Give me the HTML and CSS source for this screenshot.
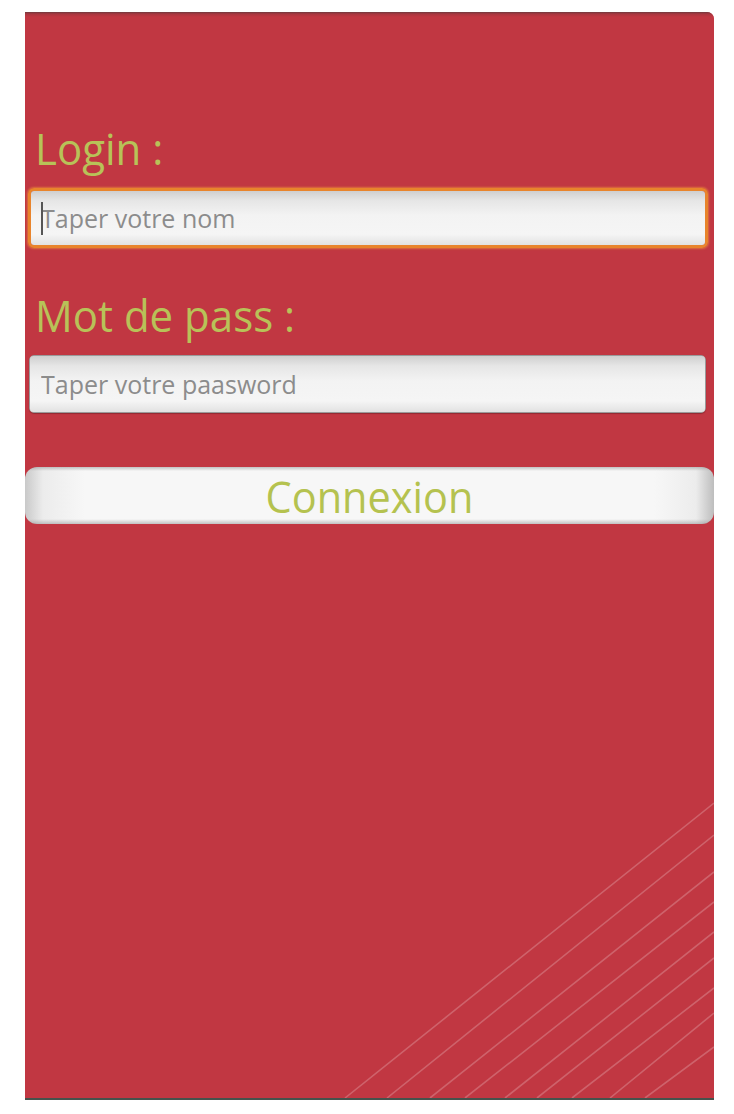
FILE: index.html
```html
<!DOCTYPE html>
<html lang="fr">
<head>
<meta charset="utf-8">
<title>Login</title>
<link rel="stylesheet" href="styles.css">
</head>
<body>
<div class="panel">
  <svg class="stripes" viewBox="0 0 689 1086" preserveAspectRatio="none" aria-hidden="true">
    <g stroke="rgba(255,255,255,0.22)" stroke-width="1.6" fill="none">
      <line x1="689" y1="791" x2="320" y2="1086"/>
      <line x1="689" y1="823" x2="362" y2="1086"/>
      <line x1="689" y1="860" x2="405" y2="1086"/>
      <line x1="689" y1="890" x2="440" y2="1086"/>
      <line x1="689" y1="920" x2="480" y2="1086"/>
      <line x1="689" y1="946" x2="512" y2="1086"/>
      <line x1="689" y1="976" x2="547" y2="1086"/>
      <line x1="689" y1="1001" x2="585" y2="1086"/>
      <line x1="689" y1="1035" x2="620" y2="1086"/>
    </g>
  </svg>
  <form class="form">
    <label class="label" for="login"><span class="label-text">Login :</span></label>
    <div class="field field-focus">
      <input id="login" class="input" type="text" placeholder="Taper votre nom">
      <span class="caret"></span>
    </div>
    <label class="label label-pass" for="pass"><span class="label-text">Mot de pass :</span></label>
    <div class="field field-plain">
      <input id="pass" class="input" type="password" placeholder="Taper votre paasword">
    </div>
    <button class="button" type="button"><span class="button-text">Connexion</span></button>
  </form>
</div>
</body>
</html>
```

FILE: styles.css
```css
html, body {
  margin: 0;
  padding: 0;
  background: #ffffff;
}

body {
  font-family: "Open Sans", "Noto Sans", sans-serif;
}

.panel {
  position: relative;
  margin: 12px 0 0 25px;
  width: 689px;
  height: 1086px;
  background-color: #c13742;
  background-image: linear-gradient(to bottom, #6f3b3f 0, #a9363f 2px, #c13742 5px);
  border-top-right-radius: 7px;
  border-bottom: 2px solid #46524c;
  box-shadow: 0 3px 0 #c6d7ca;
  overflow: hidden;
}

.stripes {
  position: absolute;
  left: 0;
  top: 0;
  width: 689px;
  height: 1086px;
  pointer-events: none;
}

.form {
  position: relative;
  display: flex;
  flex-direction: column;
  padding-top: 113px;
}

.label {
  display: block;
  margin-left: 10px;
  height: 48px;
  line-height: 48px;
  font-size: 42px;
  color: #b8c258;
}

.label-text {
  display: inline-block;
  transform: scaleY(1.05);
  transform-origin: 0 70%;
}

.label-pass {
  margin-top: 44px;
}

.field {
  position: relative;
  margin-top: 15px;
  box-sizing: border-box;
}

.field-focus {
  margin-left: 3px;
  width: 680px;
  height: 60px;
  border: 3px solid #e8842c;
  border-radius: 6px;
  box-shadow: 0 0 2px 1px rgba(240, 150, 60, 0.6);
}

.field-plain {
  margin-left: 4px;
  width: 677px;
  height: 58px;
  border: 1px solid #9a9a9a;
  border-radius: 5px;
  box-shadow: 0 1px 1px rgba(0, 0, 0, 0.25);
}

.input {
  display: block;
  width: 100%;
  height: 100%;
  box-sizing: border-box;
  margin: 0;
  border: 0;
  border-radius: 3px;
  padding: 0 0 0 10px;
  font-family: "Open Sans", "Noto Sans", sans-serif;
  font-size: 25px;
  color: #333;
  background: linear-gradient(to bottom, #cfcfcf 0, #e6e6e6 18%, #f3f3f3 45%, #f5f5f5 80%, #e2e2e2 100%);
  outline: none;
}

.input::placeholder {
  color: #8c8c8c;
  opacity: 1;
}

.field-plain .input {
  padding-left: 11px;
}

.caret {
  position: absolute;
  left: 10px;
  top: 11px;
  width: 2px;
  height: 33px;
  background: #555;
}

.button {
  margin-top: 54px;
  width: 689px;
  height: 57px;
  padding: 0;
  border: 0;
  border-radius: 12px;
  font-family: "Open Sans", "Noto Sans", sans-serif;
  font-size: 41.5px;
  color: #b5c24f;
  background:
    linear-gradient(to bottom, rgba(150,150,150,0.55) 0, rgba(255,255,255,0) 4px, rgba(255,255,255,0) 52px, rgba(150,150,150,0.55) 57px),
    linear-gradient(to right, #c9c9c9 0, #ececec 18px, #f7f7f7 60px, #f7f7f7 629px, #ececec 671px, #bdbdbd 689px);
  cursor: pointer;
}

.button-text {
  display: inline-block;
  transform: scaleY(1.06);
}
```
